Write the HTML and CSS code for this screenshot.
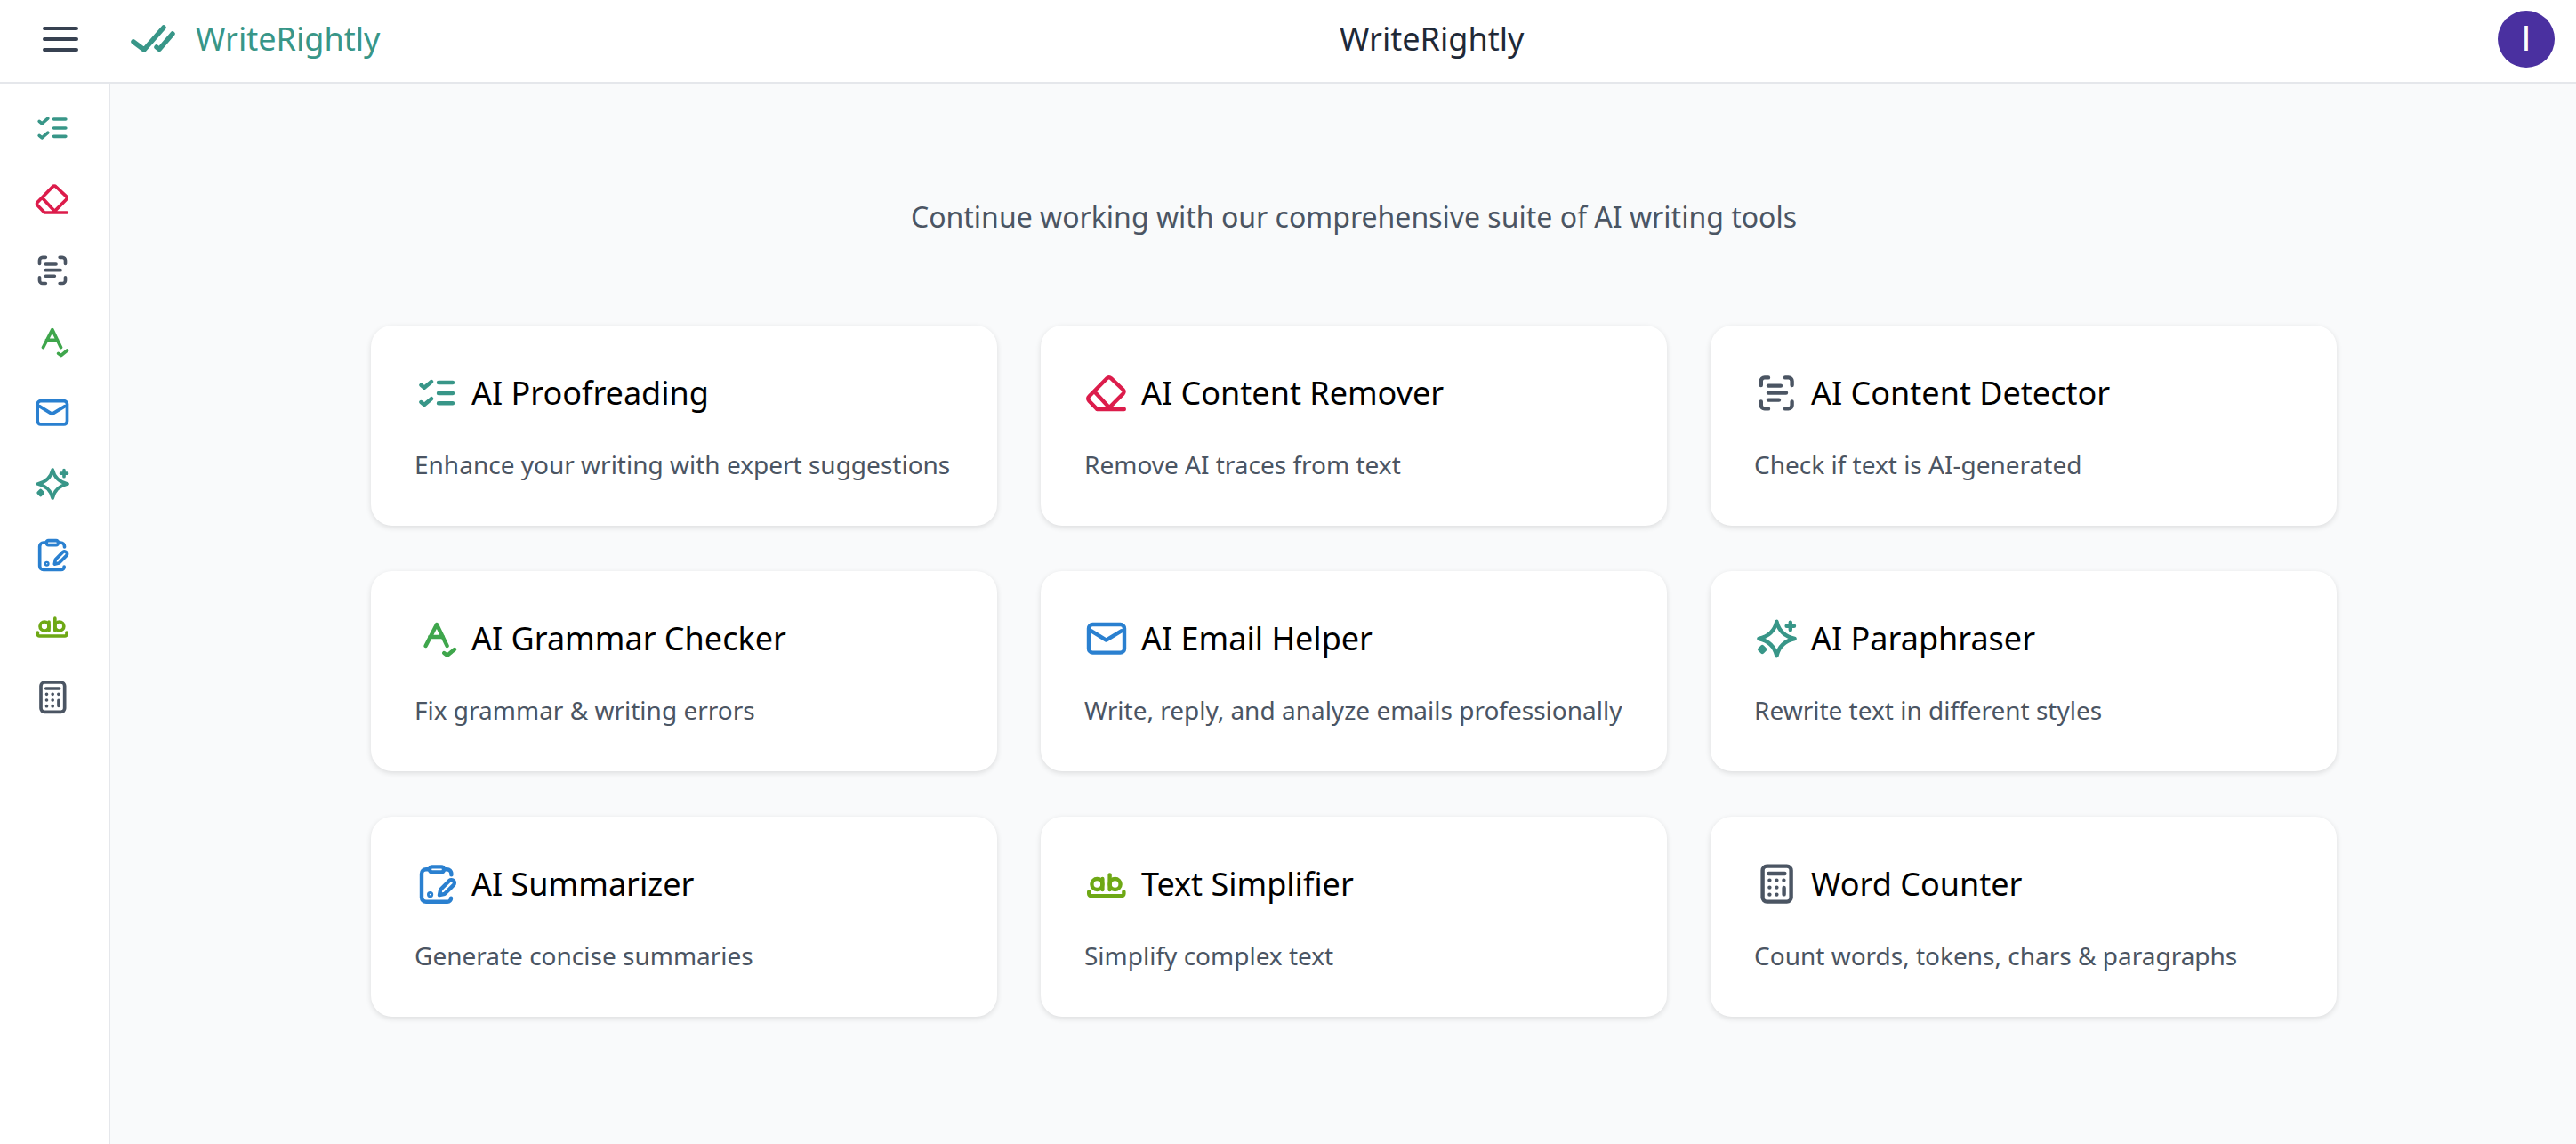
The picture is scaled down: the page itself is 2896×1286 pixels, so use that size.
FILE: index.html
```html
<!DOCTYPE html>
<html lang="en">
<head>
    <meta charset="UTF-8">
    <meta name="viewport" content="width=device-width, initial-scale=1.0">
    <title>WriteRightly</title>
    <link rel="stylesheet" href="styles.css">
</head>
<body>
    <!-- Icon set, shared by the sidebar and the cards -->
    <svg class="sprite" xmlns="http://www.w3.org/2000/svg">
        <symbol id="i-proof" viewBox="0 0 24 24">
            <path d="M3.7 7.4 5.5 8.9 9.5 5.5M3.7 17 5.5 18.5 9.5 15.1M13.5 6H21.5M13.5 12H21.5M13.5 17.6H21.5"/>
        </symbol>
        <symbol id="i-eraser" viewBox="0 0 24 24">
            <path d="M12.7 3.6a1.6 1.6 0 0 1 2.3 0L21.8 10a1.6 1.6 0 0 1 0 2.3L13.5 20.6 13 21H7.2L2.6 16.2a1.6 1.6 0 0 1 0-2.3ZM5.6 11 14.2 20.2M7.2 21H22.4"/>
        </symbol>
        <symbol id="i-detect" viewBox="0 0 24 24">
            <path d="M3.9 7.5V5.2a2 2 0 0 1 2-2H8M3.9 16.7v2a2 2 0 0 0 2 2H8M17.5 3.2h1.8a2 2 0 0 1 2 2v2.3M17.5 20.7h1.8a2 2 0 0 0 2-2v-2M8 7.8H15M8 11.8H18M8 15.8H14"/>
        </symbol>
        <symbol id="i-grammar" viewBox="0 0 24 24">
            <path d="M6.3 16 12.5 4 18.3 16M8.6 11H16M16.6 20 18.4 21.4 22.5 18"/>
        </symbol>
        <symbol id="i-mail" viewBox="0 0 24 24">
            <rect x="2.5" y="4" width="20" height="15.8" rx="2.2"/>
            <path d="M3.8 7.6 12.3 12.8 21 7.6"/>
        </symbol>
        <symbol id="i-spark" viewBox="0 0 24 24">
            <path d="M12.7 2.4Q10.9 10.2 2.7 12 10.9 13.8 12.7 21.6 14.5 13.8 22.8 12 14.5 10.2 12.7 2.4ZM20.4 2.8V7M18.3 4.9H22.5"/>
            <path class="solid" d="M4.6 16.5 6.1 18 4.6 19.5 3.1 18Z"/>
        </symbol>
        <symbol id="i-clip" viewBox="0 0 24 24">
            <path d="M7.6 3.6H6.5A2.5 2.5 0 0 0 4 6.1V19.4A2.5 2.5 0 0 0 6.5 21.9H18.5A2 2 0 0 0 20.5 19.8M17.5 3.6H18.2A2.5 2.5 0 0 1 20.7 6.1V6.6"/>
            <rect x="8.5" y="2.2" width="8" height="3" rx="1.4"/>
            <path d="M14 18.1 14.6 15 19.6 10A1.7 1.7 0 0 1 22 12.4L17 17.4Z"/>
            <path class="solid" d="M8.1 17.8a.7 .7 0 1 0 1.4 0 .7 .7 0 1 0-1.4 0Z"/>
        </symbol>
        <symbol id="i-simple" viewBox="0 0 24 24">
            <circle cx="7.2" cy="12" r="3"/>
            <circle cx="17.3" cy="12" r="3"/>
            <path d="M10.2 9V15M14.3 6.7V15M2.6 16.2V17.4A1.2 1.2 0 0 0 3.8 18.6H21A1.2 1.2 0 0 0 22.2 17.4V16.2"/>
        </symbol>
        <symbol id="i-calc" viewBox="0 0 24 24">
            <rect x="4.8" y="1.8" width="16" height="20" rx="2.4"/>
            <path d="M8.2 6H17.2M16.8 14V17.7"/>
            <path class="dots" d="M8.7 9.8h.01M12.7 9.8h.01M16.7 9.8h.01M8.7 13.8h.01M12.7 13.8h.01M8.7 17.8h.01M12.7 17.8h.01"/>
        </symbol>
    </svg>

    <header class="topbar">
        <button class="menu-btn" type="button" aria-label="Menu">
            <svg class="menu-icon" viewBox="0 0 24 24"><path d="M3 6H21M3 12H21M3 18H21"/></svg>
        </button>
        <a class="brand">
            <svg class="brand-icon" viewBox="0 0 56 36"><path d="M6 21 18 30 40 5M32 27 35 29.5 50 12"/></svg>
            <span>WriteRightly</span>
        </a>
        <div class="page-title">WriteRightly</div>
        <div class="avatar">I</div>
    </header>

    <div class="layout">
        <nav class="sidebar">
            <svg class="icon teal"><use href="#i-proof"/></svg>
            <svg class="icon red"><use href="#i-eraser"/></svg>
            <svg class="icon slate"><use href="#i-detect"/></svg>
            <svg class="icon green"><use href="#i-grammar"/></svg>
            <svg class="icon blue"><use href="#i-mail"/></svg>
            <svg class="icon teal"><use href="#i-spark"/></svg>
            <svg class="icon blue"><use href="#i-clip"/></svg>
            <svg class="icon lime"><use href="#i-simple"/></svg>
            <svg class="icon slate"><use href="#i-calc"/></svg>
        </nav>

        <main class="content">
            <p class="lead">Continue working with our comprehensive suite of AI writing tools</p>

            <div class="tools">
                <div class="card">
                    <div class="card-head"><svg class="icon teal"><use href="#i-proof"/></svg><h3>AI Proofreading</h3></div>
                    <p>Enhance your writing with expert suggestions</p>
                </div>
                <div class="card">
                    <div class="card-head"><svg class="icon red"><use href="#i-eraser"/></svg><h3>AI Content Remover</h3></div>
                    <p>Remove AI traces from text</p>
                </div>
                <div class="card">
                    <div class="card-head"><svg class="icon slate"><use href="#i-detect"/></svg><h3>AI Content Detector</h3></div>
                    <p>Check if text is AI-generated</p>
                </div>
                <div class="card">
                    <div class="card-head"><svg class="icon green"><use href="#i-grammar"/></svg><h3>AI Grammar Checker</h3></div>
                    <p>Fix grammar &amp; writing errors</p>
                </div>
                <div class="card">
                    <div class="card-head"><svg class="icon blue"><use href="#i-mail"/></svg><h3>AI Email Helper</h3></div>
                    <p>Write, reply, and analyze emails professionally</p>
                </div>
                <div class="card">
                    <div class="card-head"><svg class="icon teal"><use href="#i-spark"/></svg><h3>AI Paraphraser</h3></div>
                    <p>Rewrite text in different styles</p>
                </div>
                <div class="card">
                    <div class="card-head"><svg class="icon blue"><use href="#i-clip"/></svg><h3>AI Summarizer</h3></div>
                    <p>Generate concise summaries</p>
                </div>
                <div class="card">
                    <div class="card-head"><svg class="icon lime"><use href="#i-simple"/></svg><h3>Text Simplifier</h3></div>
                    <p>Simplify complex text</p>
                </div>
                <div class="card">
                    <div class="card-head"><svg class="icon slate"><use href="#i-calc"/></svg><h3>Word Counter</h3></div>
                    <p>Count words, tokens, chars &amp; paragraphs</p>
                </div>
            </div>
        </main>
    </div>
</body>
</html>
```

FILE: styles.css
```css
* {
    box-sizing: border-box;
}

html, body {
    height: 100%;
}

body {
    display: flex;
    flex-direction: column;
    margin: 0;
    overflow: hidden;
    font-family: "Noto Sans", sans-serif;
    background-color: #fff;
}

.sprite {
    display: none;
}

/* Top bar */
.topbar {
    display: flex;
    align-items: center;
    flex: 0 0 94px;
    padding: 0 24px 5px 44px;
    background: #fff;
    border-bottom: 2px solid #e5e7eb;
}

.menu-btn {
    display: flex;
    width: 48px;
    height: 48px;
    padding: 0;
    border: none;
    background: none;
}

.menu-icon {
    width: 48px;
    height: 48px;
    fill: none;
    stroke: #374151;
    stroke-width: 2;
    stroke-linecap: round;
}

.brand {
    display: flex;
    align-items: center;
    gap: 20px;
    margin-left: 52px;
    color: #389688;
    font-size: 36px;
}

.brand-icon {
    width: 56px;
    height: 36px;
    fill: none;
    stroke: #389688;
    stroke-width: 5.5;
    stroke-linecap: round;
    stroke-linejoin: round;
}

.page-title {
    flex: 1;
    padding-right: 16px;
    text-align: center;
    color: #1f2937;
    font-size: 36px;
}

.avatar {
    display: flex;
    align-items: center;
    justify-content: center;
    flex: none;
    width: 64px;
    height: 64px;
    margin-top: 1px;
    border-radius: 50%;
    background: #4a30a0;
    color: #fff;
    font-family: Roboto, sans-serif;
    font-size: 38px;
}

/* Sidebar and content */
.layout {
    display: flex;
    flex: 1;
    min-height: 0;
}

.sidebar {
    display: flex;
    flex-direction: column;
    gap: 40px;
    flex: 0 0 124px;
    padding: 30px 0 0 38px;
    background: #fff;
    border-right: 2px solid #e5e7eb;
}

.sidebar .icon {
    width: 40px;
    height: 40px;
}

.icon {
    flex: none;
    fill: none;
    stroke: currentColor;
    stroke-width: 2.2;
    stroke-linecap: round;
    stroke-linejoin: round;
}

.icon .solid {
    fill: currentColor;
    stroke-width: 1;
}

.icon .dots {
    stroke-width: 2.3;
}

.teal { color: #389688; }
.red { color: #dc1c4b; }
.slate { color: #4b5563; }
.green { color: #3fa64c; }
.blue { color: #2a80d0; }
.lime { color: #6ea815; }

.content {
    flex: 1;
    padding: 126px 0 0 24px;
    background-color: #f9fafb;
}

.lead {
    margin: 0 0 98px;
    text-align: center;
    color: #4b5563;
    font-size: 32px;
    line-height: 48px;
}

.tools {
    display: grid;
    grid-template-columns: repeat(3, 1fr);
    gap: 51px 49px;
    width: 2210px;
    margin: 0 auto;
}

.card {
    height: 225px;
    padding: 48px 48px 48px 49px;
    background: #fff;
    border-radius: 24px;
    box-shadow: 0 2px 6px rgba(0, 0, 0, 0.12);
}

.card-head {
    display: flex;
    align-items: center;
    gap: 16px;
    height: 56px;
    margin-bottom: 32px;
}

.card-head .icon {
    width: 48px;
    height: 48px;
}

.card h3 {
    margin: 0;
    color: #000;
    font-size: 36px;
    font-weight: 400;
    line-height: 56px;
}

.card p {
    margin: 0;
    color: #4b5563;
    font-size: 28px;
    line-height: 40px;
    white-space: nowrap;
}
```
